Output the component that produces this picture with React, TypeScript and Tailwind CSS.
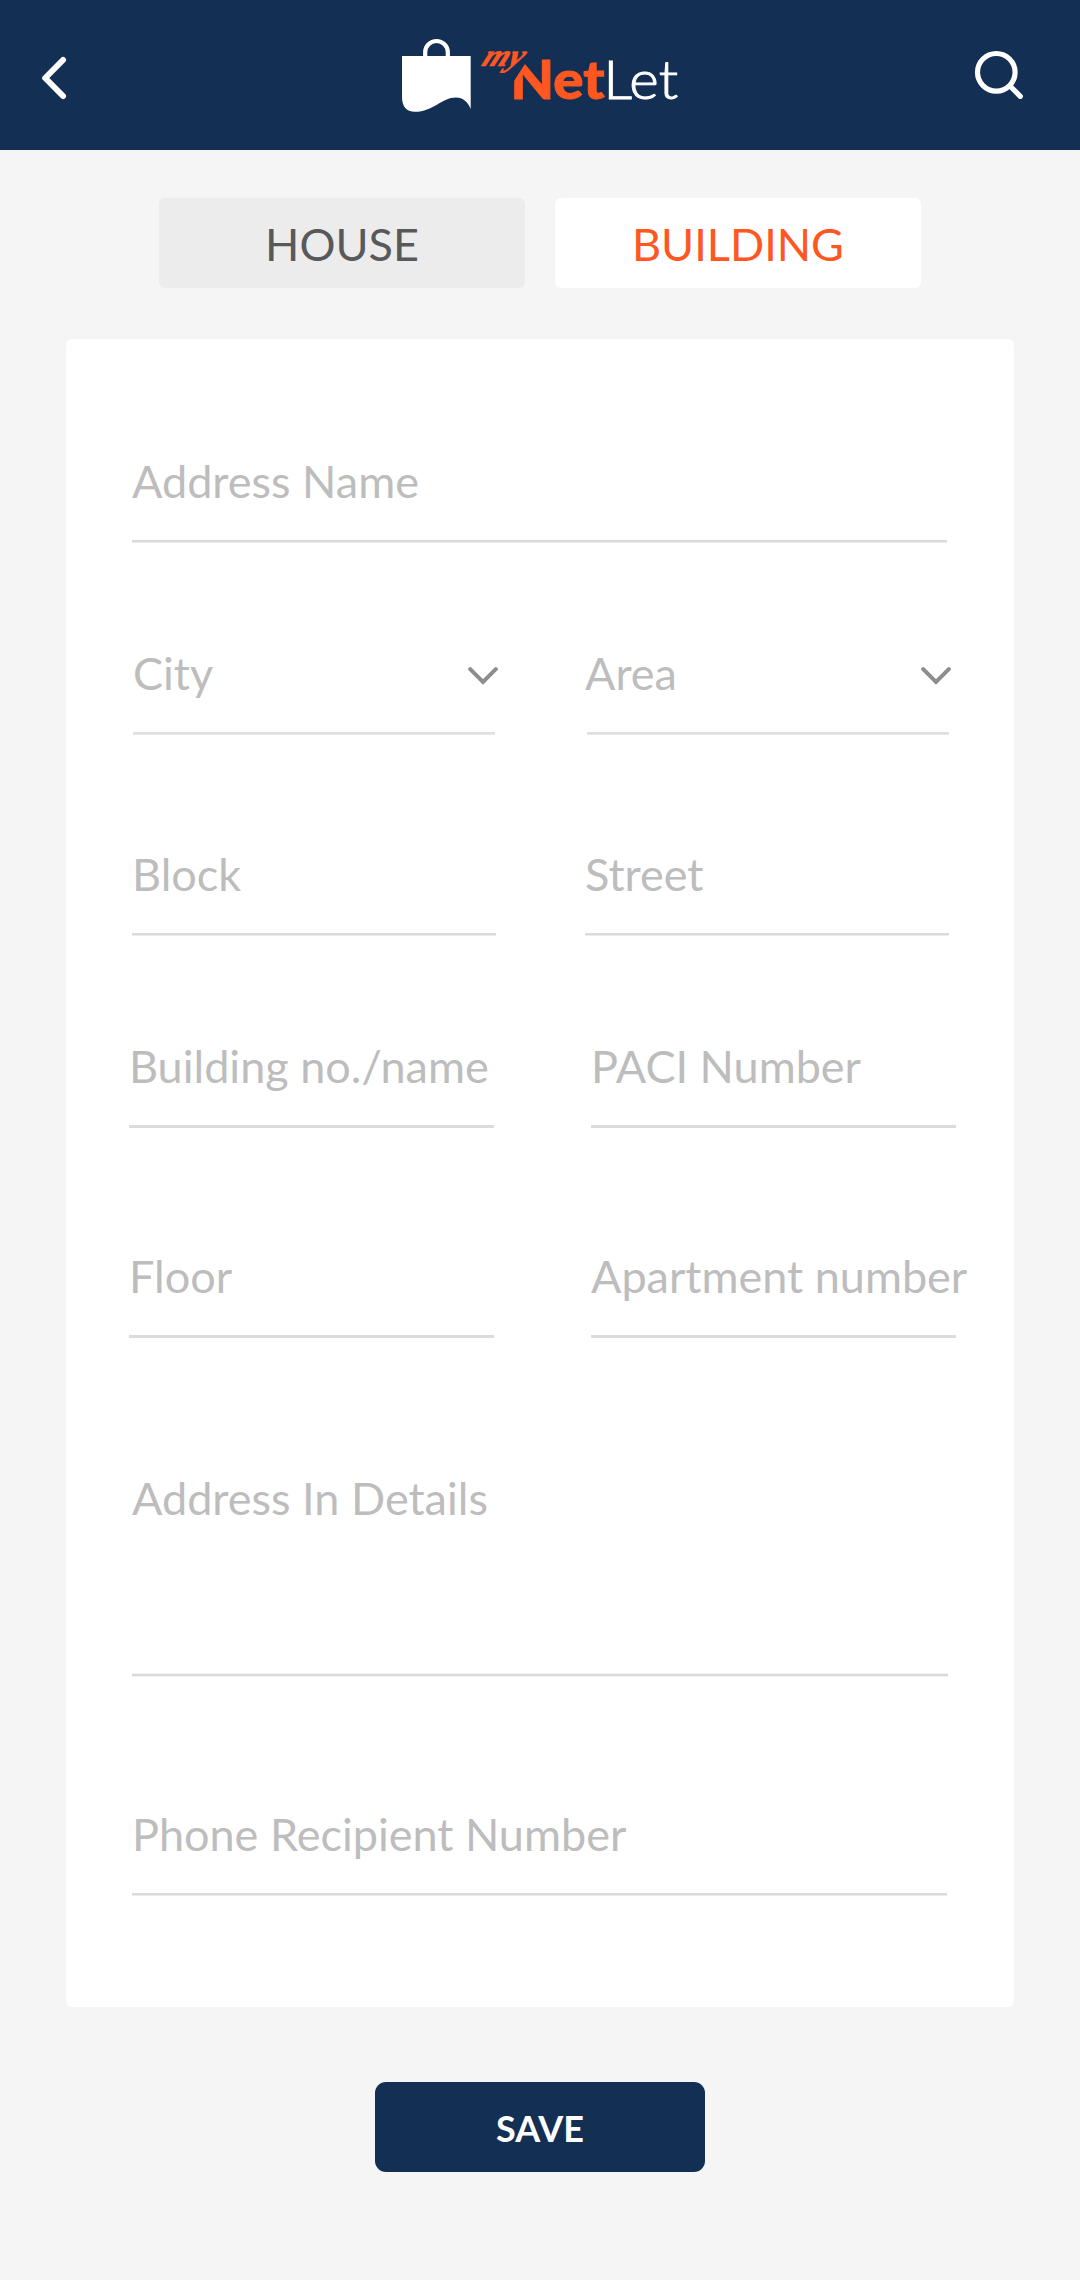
import type { ReactNode } from "react";

type FieldProps = {
  label: string;
  className?: string;
  line?: string;
  children?: ReactNode;
};

const SOFT_LINE = "bg-[#dadada] border-b border-[#ececec]";
const LIGHT_LINE = "bg-[#e0e0e0] border-b border-[#e8e8e8]";
const SOLID_LINE = "bg-[#dcdcdc]";

function Field({ label, className = "", line = SOFT_LINE, children }: FieldProps) {
  return (
    <div className={`flex h-[89px] flex-col justify-between ${className}`}>
      <div className="flex items-center justify-between whitespace-nowrap text-[45px] leading-[54px] text-[#bdbdbd]">
        <span>{label}</span>
        {children}
      </div>
      <div className={`h-[3px] ${line}`} />
    </div>
  );
}

function Chevron({ className }: { className: string }) {
  return (
    <svg className={`mt-[5px] h-[18px] w-[30px] shrink-0 ${className}`} viewBox="0 0 30 18" fill="none">
      <path d="M2.2 2.2 15 15 27.8 2.2" stroke="#8d8d8d" strokeWidth="4" strokeLinecap="round" />
    </svg>
  );
}

function Logo() {
  return (
    <svg className="h-[90px] w-[300px]" viewBox="0 0 300 90">
      <path d="M35.2 27V22.300a11.300 11.300 0 0 1 22.600 0V27" fill="none" stroke="#fff" strokeWidth="4.200" />
      <path
        d="M12 26H80.700V79C78 72 73 67.500 66 67.500C52 67.500 43 81.800 25 81.800C16 81.800 12 76 12 67Z"
        fill="#fff"
      />
      <text
        x="120.500"
        y="69.300"
        fontFamily="Lato, sans-serif"
        fontWeight="900"
        fontSize="53"
        fill="#ff5722"
        stroke="#ff5722"
        strokeWidth="1"
        textLength="94"
        lengthAdjust="spacingAndGlyphs"
      >
        Net
      </text>
      <text
        x="213.500"
        y="69.300"
        fontFamily="Lato, sans-serif"
        fontWeight="300"
        fontSize="53"
        fill="#fff"
        stroke="#fff"
        strokeWidth="1"
        textLength="74.500"
        lengthAdjust="spacingAndGlyphs"
      >
        Let
      </text>
      <path d="M119 30H137.500L124 51H119Z" fill="#132f53" />
      <text
        transform="translate(90.500 35.800) skewX(-24)"
        fontFamily="'Liberation Serif', serif"
        fontStyle="italic"
        fontWeight="700"
        fontSize="31"
        fill="#ff5722"
        stroke="#ff5722"
        strokeWidth="0.700"
        textLength="40"
        lengthAdjust="spacingAndGlyphs"
      >
        my
      </text>
    </svg>
  );
}

export default function App() {
  return (
    <div className="flex min-h-[2280px] w-[1080px] flex-col items-center bg-[#f5f5f5] font-['Lato',sans-serif]">
      <header className="flex h-[150px] w-full items-start bg-[#132f53]">
        <svg className="ml-[40px] mt-[55px] h-[46px] w-[28px]" viewBox="0 0 28 46" fill="none">
          <path
            d="M23 5 5.200 23 23 41"
            stroke="#fff"
            strokeWidth="6"
            strokeLinecap="round"
            strokeLinejoin="round"
          />
        </svg>
        <div className="ml-[322px] mr-auto mt-[30px]">
          <Logo />
        </div>
        <svg className="mr-[55px] mt-[49px] h-[52px] w-[52px] shrink-0" viewBox="0 0 52 52" fill="none">
          <circle cx="23.300" cy="23.300" r="18.800" stroke="#fff" strokeWidth="5.200" />
          <path d="M37 37 47.300 47.300" stroke="#fff" strokeWidth="5.200" strokeLinecap="round" />
        </svg>
      </header>

      <div className="mt-[48px] flex gap-[30px] text-[45px] leading-[54px]">
        <button className="h-[90px] w-[366px] rounded-[6px] bg-[#ececec] pt-[2px] text-[#58595b]">HOUSE</button>
        <button className="h-[90px] w-[366px] rounded-[6px] bg-white pt-[2px] text-[#ff5722]">BUILDING</button>
      </div>

      <main className="mt-[51px] h-[1668px] w-[948px] rounded-[6px] bg-white pl-[66px] pt-[115px]">
        <Field label="Address Name" className="w-[815px]" />

        <div className="mt-[103px] flex gap-[92px] pl-px">
          <Field label="City" className="w-[362px]" line={LIGHT_LINE}>
            <Chevron className="-mr-[3px]" />
          </Field>
          <Field label="Area" className="w-[362px] [&_span]:-ml-[2px]" line={LIGHT_LINE}>
            <Chevron className="-mr-[2px]" />
          </Field>
        </div>

        <div className="mt-[112px] flex gap-[89px]">
          <Field label="Block" className="w-[364px]" />
          <Field label="Street" className="w-[364px]" />
        </div>

        <div className="-ml-[3px] mt-[103px] flex gap-[97px]">
          <Field label="Building no./name" className="w-[365px]" line={SOLID_LINE} />
          <Field label="PACI Number" className="w-[365px]" line={SOLID_LINE} />
        </div>

        <div className="-ml-[3px] mt-[121px] flex gap-[97px]">
          <Field label="Floor" className="w-[365px]" line={SOLID_LINE} />
          <Field label="Apartment number" className="w-[365px]" line={SOLID_LINE} />
        </div>

        <div className="mt-[133px] flex h-[206px] w-[816px] flex-col justify-between">
          <span className="text-[45px] leading-[54px] text-[#bdbdbd]">Address In Details</span>
          <div className="h-[4px] border-y border-[#f3f3f3] bg-[#dadada]" />
        </div>

        <Field label="Phone Recipient Number" className="mt-[130px] w-[815px]" />
      </main>

      <button className="mt-[75px] h-[90px] w-[330px] rounded-[11px] bg-[#132f53] pt-[3px] text-[36px] font-bold leading-[43px] text-white">
        SAVE
      </button>
    </div>
  );
}
